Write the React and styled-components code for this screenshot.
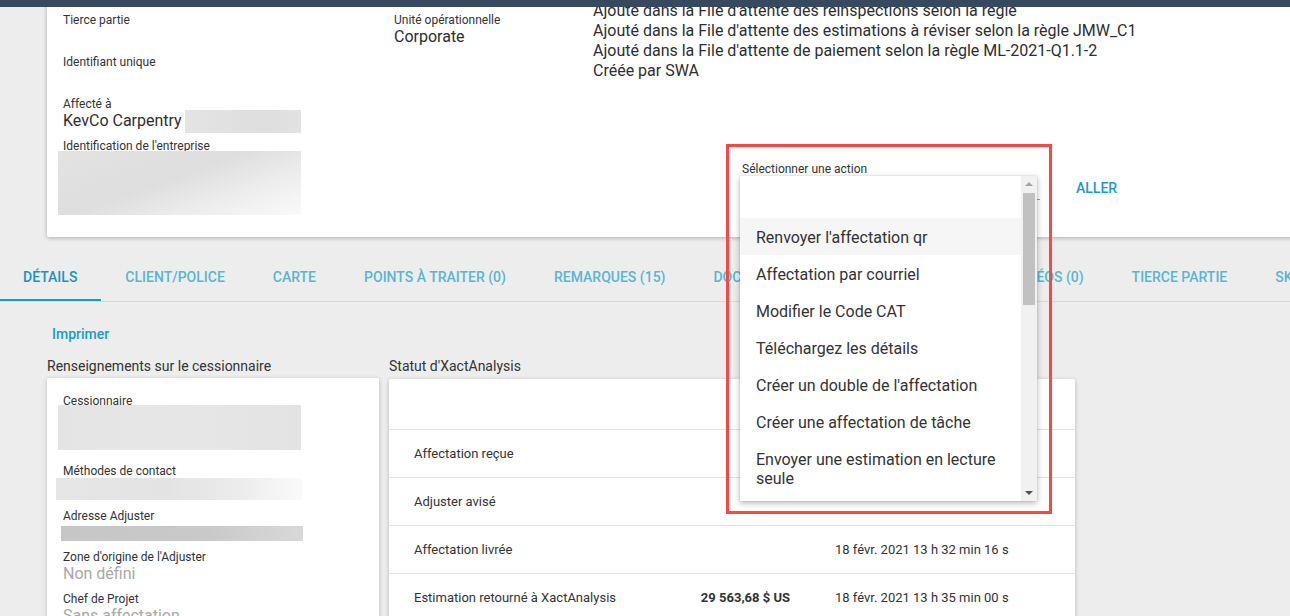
import React from 'react';
import styled, { createGlobalStyle } from 'styled-components';

const GlobalStyle = createGlobalStyle`
  * { box-sizing: border-box; }
  html, body { margin: 0; padding: 0; background: #ededed; overflow: hidden; }
  body {
    font-family: Roboto, "Liberation Sans", Arial, sans-serif;
    color: #333;
    width: 1290px;
    height: 616px;
  }
`;

const AppBar = styled.div`
  position: fixed;
  top: 0;
  left: 0;
  right: 0;
  height: 7px;
  background: #36495e;
  z-index: 30;
`;

const Page = styled.div`
  width: 1290px;
  height: 616px;
  overflow: hidden;
  position: relative;
`;

const SummaryCard = styled.section`
  margin: -40px -40px 0 47px;
  background: #fff;
  box-shadow: 0 1px 4px rgba(0, 0, 0, 0.28);
  border-radius: 2px;
  display: grid;
  grid-template-columns: 331px 199px 1fr;
  align-items: start;
  padding: 16px 0 22px 16px;
`;

const FieldColumn = styled.div`
  display: flex;
  flex-direction: column;
  padding-top: ${(p) => p.$offset || 0}px;
`;

const Field = styled.div`
  display: flex;
  flex-direction: column;
  margin-bottom: ${(p) => (p.$mb === undefined ? 9 : p.$mb)}px;
`;

const Label = styled.div`
  font-size: 12px;
  line-height: 13px;
  color: #333;
  white-space: nowrap;
`;

const Value = styled.div`
  font-size: 16px;
  line-height: 20px;
  height: 20px;
  color: ${(p) => (p.$muted ? '#a8a8a8' : '#2e2e2e')};
  display: flex;
  align-items: center;
  white-space: nowrap;
`;

const Redacted = styled.div`
  width: ${(p) => p.$w}px;
  height: ${(p) => p.$h}px;
  margin-top: ${(p) => p.$mt || 0}px;
  margin-left: ${(p) => p.$ml || 0}px;
  background: ${(p) => p.$bg || '#e2e2e2'};
  flex-shrink: 0;
`;

const HistoryLines = styled.div`
  font-size: 16px;
  line-height: 20px;
  color: #2e2e2e;
  white-space: nowrap;
`;

const ActionRow = styled.div`
  display: flex;
  align-items: flex-end;
  margin-top: 82px;
  margin-left: 149px;
`;

const SelectGroup = styled.div`
  position: relative;
  width: 298px;
  display: flex;
  flex-direction: column;
`;

const SelectBox = styled.div`
  height: 24px;
  border-bottom: 1px solid #9e9e9e;
`;

const GoButton = styled.button`
  margin-left: 28px;
  background: none;
  border: 0;
  padding: 0 8px;
  height: 24px;
  font-family: inherit;
  font-size: 14px;
  font-weight: 500;
  line-height: 24px;
  color: #1a9bc5;
  cursor: pointer;
`;

const Annotation = styled.div`
  position: absolute;
  left: -16px;
  top: -19px;
  width: 326px;
  height: 370px;
  border: 3px solid #fb4646;
  z-index: 12;
  pointer-events: none;
`;

const Menu = styled.div`
  position: absolute;
  left: -2px;
  top: 13px;
  width: 297px;
  height: 325px;
  background: #fff;
  box-shadow: 0 2px 6px rgba(0, 0, 0, 0.3), 0 0 1px rgba(0, 0, 0, 0.2);
  display: flex;
  overflow: hidden;
  z-index: 11;
`;

const OptionList = styled.ul`
  flex: 1;
  margin: 0;
  padding: 5px 0 0;
  list-style: none;
  overflow: hidden;
`;

const Option = styled.li`
  padding: 10px 16px 8px;
  min-height: 37px;
  font-size: 16px;
  line-height: 19px;
  color: #333;
  background: ${(p) => (p.$active ? '#f6f6f6' : '#fff')};
`;

const ScrollTrack = styled.div`
  width: 16px;
  background: #f1f1f1;
  position: relative;
  flex-shrink: 0;
`;

const ScrollThumb = styled.div`
  position: absolute;
  left: 2px;
  top: 17px;
  width: 12px;
  height: 112px;
  background: #c1c1c1;
`;

const ScrollArrow = styled.div`
  position: absolute;
  left: 4px;
  width: 0;
  height: 0;
  border-left: 4px solid transparent;
  border-right: 4px solid transparent;
  ${(p) =>
    p.$down
      ? `bottom: 6px; border-top: 4px solid #505050;`
      : `top: 6px; border-bottom: 4px solid #a3a3a3;`}
`;

const TabBar = styled.nav`
  display: flex;
  height: 49px;
  margin-top: 16px;
  border-bottom: 1px solid #d9d9d9;
`;

const Tab = styled.div`
  position: relative;
  flex-shrink: 0;
  display: flex;
  align-items: center;
  padding: 0 24px 0 ${(p) => (p.$first ? 23 : 24)}px;
  font-size: 14px;
  font-weight: 500;
  text-transform: uppercase;
  white-space: nowrap;
  color: ${(p) => (p.$active ? '#1a94bf' : '#59b5d2')};
  &::after {
    content: '';
    position: absolute;
    left: 0;
    right: 0;
    bottom: 0;
    height: 2px;
    background: ${(p) => (p.$active ? '#1a9bc5' : 'transparent')};
  }
`;

const Body = styled.div`
  padding: 22px 0 0 47px;
`;

const PrintLink = styled.button`
  display: block;
  background: none;
  border: 0;
  padding: 0 5px;
  font-family: inherit;
  font-size: 14px;
  font-weight: 500;
  line-height: 20px;
  color: #1a9bc5;
  cursor: pointer;
`;

const Columns = styled.div`
  display: flex;
  gap: 10px;
  margin-top: 12px;
  align-items: flex-start;
`;

const Panel = styled.div`
  display: flex;
  flex-direction: column;
  width: ${(p) => p.$w}px;
  flex-shrink: 0;
`;

const PanelTitle = styled.h3`
  margin: 0 0 ${(p) => p.$gap}px;
  font-size: 14px;
  font-weight: 400;
  line-height: 20px;
  color: #333;
`;

const Card = styled.div`
  background: #fff;
  box-shadow: 0 1px 4px rgba(0, 0, 0, 0.22);
  border-radius: 2px;
  padding: ${(p) => p.$pad || '0'};
  min-height: 300px;
`;

const StatusHeader = styled.div`
  height: 50px;
`;

const StatusRow = styled.div`
  display: grid;
  grid-template-columns: 256px 120px 1fr;
  align-items: center;
  height: 48px;
  padding-left: 25px;
  border-top: 1px solid #e0e0e0;
  font-size: 13px;
  color: #333;
  white-space: nowrap;
`;

const Amount = styled.div`
  text-align: right;
  font-weight: 700;
`;

const DateCell = styled.div`
  padding-left: 45px;
`;

const options = [
  '\u00a0',
  "Renvoyer l'affectation qr",
  'Affectation par courriel',
  'Modifier le Code CAT',
  'Téléchargez les détails',
  "Créer un double de l'affectation",
  'Créer une affectation de tâche',
  'Envoyer une estimation en lecture seule',
  'Annuler la réinspection',
];

const tabs = [
  'Détails',
  'Client/Police',
  'Carte',
  'Points à traiter (0)',
  'Remarques (15)',
  'Documents (12)',
  'Photos (124)',
  'Vidéos (0)',
  'Tierce partie',
  'Sketch',
];

const statusRows = [
  { label: 'Affectation reçue', amount: '', date: '18 févr. 2021 13 h 30 min 05 s' },
  { label: 'Adjuster avisé', amount: '', date: '' },
  { label: 'Affectation livrée', amount: '', date: '18 févr. 2021 13 h 32 min 16 s' },
  {
    label: 'Estimation retourné à XactAnalysis',
    amount: '29 563,68 $ US',
    date: '18 févr. 2021 13 h 35 min 00 s',
  },
];

export default function App() {
  return (
    <>
      <GlobalStyle />
      <AppBar />
      <Page>
        <SummaryCard>
          <FieldColumn $offset={38}>
            <Field>
              <Label>Tierce partie</Label>
              <Value />
            </Field>
            <Field>
              <Label>Identifiant unique</Label>
              <Value />
            </Field>
            <Field>
              <Label>Affecté à</Label>
              <Value>
                KevCo Carpentry
                <Redacted $w={116} $h={23} $ml={3} $bg="linear-gradient(90deg,#e4e4e4,#dedede 70%,#e2e2e2)" />
              </Value>
            </Field>
            <Field $mb={0}>
              <Label>Identification de l'entreprise</Label>
              <Redacted
                $w={243}
                $h={64}
                $mt={-2}
                $ml={-5}
                $bg="linear-gradient(160deg,#e3e3e3 0%,#dedede 45%,#ececec 70%,#fafafa 100%)"
              />
            </Field>
          </FieldColumn>
          <FieldColumn $offset={38}>
            <Field>
              <Label>Unité opérationnelle</Label>
              <Value>Corporate</Value>
            </Field>
          </FieldColumn>
          <FieldColumn $offset={5}>
            <HistoryLines>
              <div>Affectation reçue de XactAnalysis</div>
              <div>Ajouté dans la File d'attente des réinspections selon la règle</div>
              <div>Ajouté dans la File d'attente des estimations à réviser selon la règle JMW_C1</div>
              <div>Ajouté dans la File d'attente de paiement selon la règle ML-2021-Q1.1-2</div>
              <div>Créée par SWA</div>
            </HistoryLines>
            <ActionRow>
              <SelectGroup>
                <Label>Sélectionner une action</Label>
                <SelectBox />
                <Menu>
                  <OptionList>
                    {options.map((o, i) => (
                      <Option key={i} $active={i === 1}>
                        {o}
                      </Option>
                    ))}
                  </OptionList>
                  <ScrollTrack>
                    <ScrollArrow />
                    <ScrollThumb />
                    <ScrollArrow $down />
                  </ScrollTrack>
                </Menu>
                <Annotation />
              </SelectGroup>
              <GoButton>ALLER</GoButton>
            </ActionRow>
          </FieldColumn>
        </SummaryCard>

        <TabBar>
          {tabs.map((t, i) => (
            <Tab key={t} $active={i === 0} $first={i === 0}>
              {t}
            </Tab>
          ))}
        </TabBar>

        <Body>
          <PrintLink>Imprimer</PrintLink>
          <Columns>
            <Panel $w={332}>
              <PanelTitle $gap={2}>Renseignements sur le cessionnaire</PanelTitle>
              <Card $pad="17px 16px">
                <Field $mb={15}>
                  <Label>Cessionnaire</Label>
                  <Redacted
                    $w={243}
                    $h={45}
                    $mt={-3}
                    $ml={-5}
                    $bg="linear-gradient(90deg,#e4e4e4,#e6e6e6 50%,#e3e3e3)"
                  />
                </Field>
                <Field $mb={10}>
                  <Label>Méthodes de contact</Label>
                  <Redacted
                    $w={246}
                    $h={22}
                    $mt={0}
                    $ml={-7}
                    $bg="linear-gradient(90deg,#e6e6e6 0%,#e3e3e3 45%,#ececec 75%,#fafafa 100%)"
                  />
                </Field>
                <Field $mb={10}>
                  <Label>Adresse Adjuster</Label>
                  <Redacted
                    $w={242}
                    $h={15}
                    $mt={3}
                    $ml={-2}
                    $bg="linear-gradient(90deg,#c6c6c6,#c9c9c9 60%,#d8d8d8)"
                  />
                </Field>
                <Field>
                  <Label>Zone d'origine de l'Adjuster</Label>
                  <Value $muted>Non défini</Value>
                </Field>
                <Field>
                  <Label>Chef de Projet</Label>
                  <Value $muted>Sans affectation</Value>
                </Field>
              </Card>
            </Panel>
            <Panel $w={686}>
              <PanelTitle $gap={3}>Statut d'XactAnalysis</PanelTitle>
              <Card>
                <StatusHeader />
                {statusRows.map((r) => (
                  <StatusRow key={r.label}>
                    <div>{r.label}</div>
                    <Amount>{r.amount}</Amount>
                    <DateCell>{r.date}</DateCell>
                  </StatusRow>
                ))}
              </Card>
            </Panel>
          </Columns>
        </Body>
      </Page>
    </>
  );
}
